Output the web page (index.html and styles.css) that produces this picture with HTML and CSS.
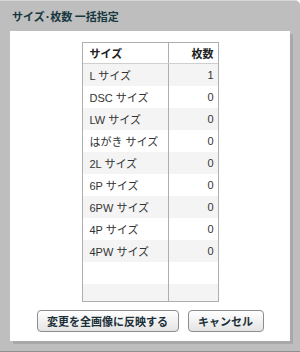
FILE: index.html
```html
<!DOCTYPE html>
<html lang="ja">
<head>
    <meta charset="UTF-8">
    <title>サイズ・枚数 一括指定</title>
    <link rel="stylesheet" href="styles.css">
</head>
<body>
    <div class="dialog">
        <div class="dialog-title">サイズ･枚数 一括指定</div>
        <div class="panel">
            <div class="grid-wrap">
                <table class="grid">
                    <thead>
                        <tr><th class="col-size">サイズ</th><th class="col-num">枚数</th></tr>
                    </thead>
                    <tbody>
                        <tr><td>L サイズ</td><td class="num">1</td></tr>
                        <tr><td>DSC サイズ</td><td class="num">0</td></tr>
                        <tr><td>LW サイズ</td><td class="num">0</td></tr>
                        <tr><td>はがき サイズ</td><td class="num">0</td></tr>
                        <tr><td>2L サイズ</td><td class="num">0</td></tr>
                        <tr><td>6P サイズ</td><td class="num">0</td></tr>
                        <tr><td>6PW サイズ</td><td class="num">0</td></tr>
                        <tr><td>4P サイズ</td><td class="num">0</td></tr>
                        <tr><td>4PW サイズ</td><td class="num">0</td></tr>
                        <tr><td>&nbsp;</td><td class="num">&nbsp;</td></tr>
                        <tr><td>&nbsp;</td><td class="num">&nbsp;</td></tr>
                    </tbody>
                </table>
            </div>
            <div class="buttons">
                <button type="button" class="btn btn-apply">変更を全画像に反映する</button>
                <button type="button" class="btn btn-cancel">キャンセル</button>
            </div>
        </div>
    </div>
</body>
</html>
```

FILE: styles.css
```css
body {
    margin: 0;
    padding: 0;
    font-family: "Liberation Sans", "Noto Sans CJK JP", sans-serif;
}
.dialog {
    width: 300px;
    height: 352px;
    box-sizing: border-box;
    background: #bebebe;
    border-top: 1px solid #d6d6d6;
    border-bottom: 1px solid #8e8e8e;
    border-radius: 0 5px 0 0;
    display: flex;
    flex-direction: column;
}
.dialog-title {
    height: 30px;
    box-sizing: border-box;
    padding: 8px 0 0 12px;
    font-family: "Noto Sans CJK JP", sans-serif;
    font-size: 11px;
    font-weight: bold;
    color: #183840;
    line-height: 14px;
}
.panel {
    margin: 0 10px;
    width: 280px;
    height: 310px;
    box-sizing: border-box;
    background: #fff;
    box-shadow: 3px 3px 0 #a9a9a9;
    padding-top: 11px;
    display: flex;
    flex-direction: column;
    align-items: center;
}
.grid-wrap {
    width: 137px;
    height: 260px;
    box-sizing: border-box;
    border: 1px solid #aeaeae;
    overflow: hidden;
}
.grid {
    width: 100%;
    border-collapse: collapse;
    font-size: 11px;
    color: #333;
}
.grid th {
    height: 20px;
    padding: 0 4px 0 7px;
    font-family: "Noto Sans CJK JP", sans-serif;
    font-weight: bold;
    color: #222;
    text-align: left;
    border-bottom: 1px solid #cfcfcf;
}
.grid th.col-size {
    width: 74px;
}
.grid th.col-num {
    text-align: right;
    border-left: 1px solid #aeaeae;
}
.grid td {
    height: 22px;
    padding: 0 4px 0 7px;
    white-space: nowrap;
}
.grid td.num {
    text-align: right;
    border-left: 1px solid #aeaeae;
}
.grid tbody tr:nth-child(odd) {
    background: #f4f4f4;
}
.buttons {
    display: flex;
    gap: 9px;
    margin-top: 8px;
}
.btn {
    height: 22px;
    border: 1px solid #8c8c8c;
    border-radius: 4px;
    background: linear-gradient(#ffffff, #e4e4e4);
    font-family: "Noto Sans CJK JP", sans-serif;
    font-size: 11px;
    font-weight: bold;
    color: #1b2f38;
    padding: 0;
    cursor: pointer;
}
.btn-apply {
    width: 142px;
}
.btn-cancel {
    width: 76px;
}
```
